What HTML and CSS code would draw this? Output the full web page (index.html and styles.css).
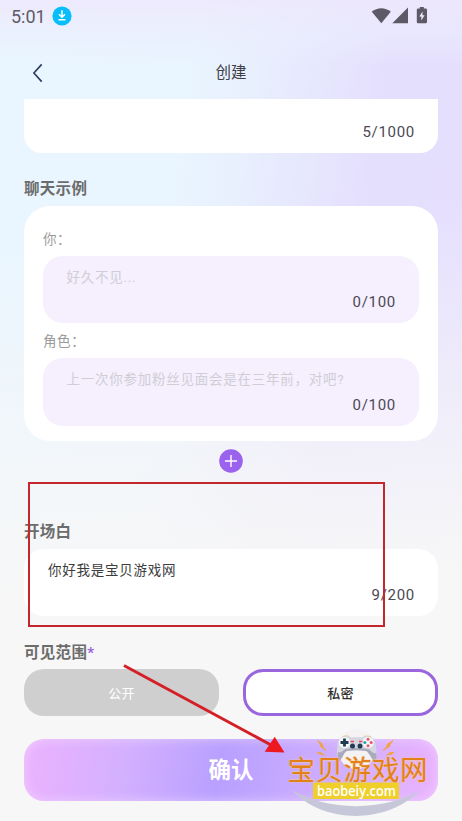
FILE: index.html
```html
<!DOCTYPE html>
<html lang="zh-CN">
<head>
<meta charset="utf-8">
<title>创建</title>
<link rel="stylesheet" href="styles.css">
</head>
<body>
<div class="screen">
  <div class="status">
    <span class="time">5:01</span>
    <svg class="download" viewBox="0 0 20 20"><circle cx="10" cy="10" r="9.6" fill="#08bdfb"/><path d="M10 4.200v7M7 8.200l3 3 3-3M6.500 13.800h7" fill="none" stroke="#fff" stroke-width="1.500"/></svg>
    <svg class="signals" viewBox="0 0 60 20" fill="#5e5967"><path d="M1.800 5.800C7 1 15.500 1 20.800 5.800L11.300 17.200z"/><path d="M38 1.500V17.200H22.300z"/><path fill-rule="evenodd" d="M49.800 1h4v1.500h2q1.200 0 1.200 1.200v12.300q0 1.200-1.200 1.200h-7.800q-1.200 0-1.200-1.200V3.700q0-1.200 1.200-1.200h1.800zM52.500 5.500l-3.200 5h2v4l3.300-5.200h-2.100z"/></svg>
  </div>
  <header class="nav">
    <svg class="back" viewBox="0 0 12 20"><path d="M9.700 1.400L1.900 10l7.800 8.600" fill="none" stroke="#2c3a63" stroke-width="1.600"/></svg>
    <h1>创建</h1>
  </header>
  <main>
    <div class="card cut"><span class="count">5/1000</span></div>
    <h2 class="t-example">聊天示例</h2>
    <section class="card dialog">
      <label>你：</label>
      <div class="field"><p>好久不见...</p><span class="count">0/100</span></div>
      <label class="second">角色：</label>
      <div class="field tall"><p>上一次你参加粉丝见面会是在三年前，对吧?</p><span class="count">0/100</span></div>
    </section>
    <svg class="add" viewBox="0 0 24 24"><circle cx="12" cy="12" r="11.800" fill="#9b62ee"/><path d="M12 6v12M6 12h12" stroke="#fff" stroke-width="1.400"/></svg>
    <h2 class="t-opening">开场白</h2>
    <section class="card opening"><p>你好我是宝贝游戏网</p><span class="count">9/200</span></section>
    <h2 class="t-scope">可见范围<span class="star">*</span></h2>
    <div class="choices"><button class="public">公开</button><button class="private">私密</button></div>
    <button class="confirm">确认</button>
  </main>
  <svg class="overlay" viewBox="0 0 462 821">
    <rect x="29" y="483" width="355" height="143" fill="none" stroke="#c1272d" stroke-width="2"/>
    <path d="M124 665.500L271 745" stroke="#d51f26" stroke-width="3"/>
    <path d="M274.700 736.700L284.500 752.500L264.700 751.700z" fill="#ed1820"/>
    <path d="M292 790C323 824.500 388 824.500 420 790C385 811.500 327 811.500 292 790z" fill="#c6c8d9"/>
    <ellipse cx="356.500" cy="749" rx="19" ry="20" fill="#f4f2f3"/>
    <path d="M342 737.500q1-2.300 4-2l2.500.2v3h-6.500zM364 735.700h5q2.300 0 2.500 3h-7.500z" fill="#e8bf67"/>
    <path d="M342 737q5-2 9 .2h11q4-2.200 9-.2c4 2 4.500 5 5 10 .5 5 1.500 14-.5 14.300-3 .5-6-9-9.500-10.300q-9-1.500-19 0c-3.500 1.300-5 10-8.500 10.300-2.500.2-1.500-9-1-14.300.5-5 1-8.500 4.500-10z" fill="#d6d6e0"/>
    <path d="M338 752c-.7 5-.8 9 .5 9.300 3-.3 5-9 8.500-10.300q9-1.500 19 0c3.500 1.300 6.500 10.800 9.500 10.300 1.300-.3 1.200-4.500.8-8.300-2 1-5-1.500-7-3.500-7-2-18-2-25 0-2 2-4.300 4-6.300 2.500z" fill="#a9abbd"/>
    <circle cx="344.500" cy="742.500" r="5.700" fill="#f3f5f7"/><circle cx="368" cy="742.500" r="5.700" fill="#f3f5f7"/>
    <path d="M344.500 738.500v8M340.500 742.500h8" stroke="#1d3a50" stroke-width="2.800"/>
    <circle cx="352.500" cy="746" r="2.500" fill="#213b52"/><circle cx="360" cy="746" r="2.500" fill="#213b52"/>
    <path d="M350.500 741.500h3.500M359 741.500h3.500" stroke="#e84a63" stroke-width="1.500"/>
    <circle cx="368" cy="739.300" r="1.500" fill="#ef5368"/><circle cx="368" cy="745.700" r="1.500" fill="#ef5368"/><circle cx="364.800" cy="742.500" r="1.500" fill="#18a7b5"/><circle cx="371.200" cy="742.500" r="1.500" fill="#ef5368"/>
    <path d="M317.500 740.500l5 3.500.5 3 3 3.500-5.500-4-.5-2.500zM317 752.500l4 .2 2 1.500 1.500.8-4-.7zM393 740.500l-6 4 0 2-4 4 6.500-4 .5-2zM394 752.500l-4 0-2 1.700-1.500.8 4.500-.5z" fill="#f3a13a" stroke="#efa446" stroke-width=".9"/>
    <text class="brand" x="287.500" y="779.500" textLength="140">宝贝游戏网</text>
    <rect x="313" y="782.500" width="86" height="16.500" fill="#efcf29"/>
    <text class="domain" x="317" y="795.500" textLength="79" lengthAdjust="spacingAndGlyphs">baobeiy.com</text>
  </svg>
</div>
</body>
</html>
```
FILE: styles.css
```css
* { box-sizing: border-box; }
body { margin: 0; font-family: Roboto, "Noto Sans CJK SC", sans-serif; }
h1, h2, p { margin: 0; }
button { font-family: inherit; padding: 0; border: 0; }
.screen {
  position: relative;
  width: 462px;
  height: 821px;
  overflow: hidden;
  background:
    linear-gradient(180deg, rgba(238,232,252,.85) 0, rgba(235,237,253,.6) 35px, rgba(235,242,254,0) 66px),
    linear-gradient(176deg, rgba(247,247,247,0) 230px, rgba(247,247,247,.65) 455px, #f7f7f7 610px),
    linear-gradient(98deg, #e9f6ff 0, #e9f5ff 34%, #e8effd 46%, #e5dffe 68%, #e5dffd 100%);
}
.status { display: flex; align-items: center; height: 32px; padding: 0 31px 0 11px; }
.time { width: 41px; font-size: 18px; color: #5e5967; }
.download { width: 20px; height: 20px; }
.signals { width: 60px; height: 20px; margin-left: auto; transform: translate(-1px, 0); }
.nav { display: grid; grid-template-columns: 24px 1fr 24px; align-items: center; height: 67px; padding: 14px 32px 0; }
.back { width: 12px; height: 20px; }
h1 { font-size: 15.5px; line-height: 22px; font-weight: 400; color: #3f3f47; text-align: center; }
main { display: flex; flex-direction: column; padding: 0 24px; }
.card { background: #fff; border-radius: 20px; }
.cut { height: 53.500px; border-radius: 0 0 18px 18px; padding: 22.500px 23px 0; }
.count { display: block; text-align: right; font-size: 15px; line-height: 20px; letter-spacing: .7px; color: #4b4955; }
h2 { font-size: 15.500px; line-height: 22px; letter-spacing: .3px; font-weight: 700; color: #6c6c6c; }
.t-example { margin: 25.500px 0 6px; }
.dialog { height: 235px; border-radius: 26px; padding: 23px 19px 0; }
label { display: block; height: 27px; font-size: 13.500px; line-height: 20px; letter-spacing: .6px; color: #9b9b9b; }
.second { margin-top: 8px; }
.field { height: 67px; border-radius: 20px; background: #f5effe; padding: 11px 23px 0 23.500px; }
.field p, .opening p { font-size: 13.500px; line-height: 20px; letter-spacing: .75px; white-space: nowrap; }
.field p { color: #d0ced4; }
.field .count { margin-top: 5px; }
.tall { height: 68px; }
.tall .count { margin-top: 6px; }
.add { width: 24px; height: 24px; align-self: center; margin-top: 8px; }
.t-opening { margin: 48px 0 6px; }
.opening { height: 67px; padding: 11px 23px 0 24px; }
.opening p { color: #3c3c3c; }
.opening .count { margin-top: 5px; }
.t-scope { margin: 25px 0 6px; transform: translateY(.5px); }
.star { color: #9b62dd; font-weight: 500; }
.choices { display: grid; grid-template-columns: 1fr 1fr; gap: 24px; }
.choices button { height: 47px; border-radius: 20px; font-size: 13px; letter-spacing: .3px; }
.choices .public { background: #cfcfcf; color: #fff; }
.choices .private { background: #fff; border: 3px solid #9966dd; color: #303030; font-weight: 500; }
.confirm {
  margin-top: 23px;
  height: 62px;
  padding-bottom: 4px;
  border-radius: 20px;
  background: linear-gradient(100deg, #e9b2fe 3%, #d3b0ff 25%, #b9a0ff 47%, #bea4ff 55%, #d3b0ff 78%, #e9b2fe 98%);
  box-shadow: inset 0 0 12px 0 rgba(247,230,255,.55);
  color: #fff;
  font-size: 22.500px;
  font-weight: 700;
}
.overlay { position: absolute; inset: 0; width: 462px; height: 821px; pointer-events: none; }
.brand { font: 400 27.500px "Noto Sans CJK SC", sans-serif; fill: #e28019; stroke: #f6c78f; stroke-width: .8px; paint-order: stroke; }
.domain { font: 600 15px "Open Sans", sans-serif; fill: #fff; }
```
